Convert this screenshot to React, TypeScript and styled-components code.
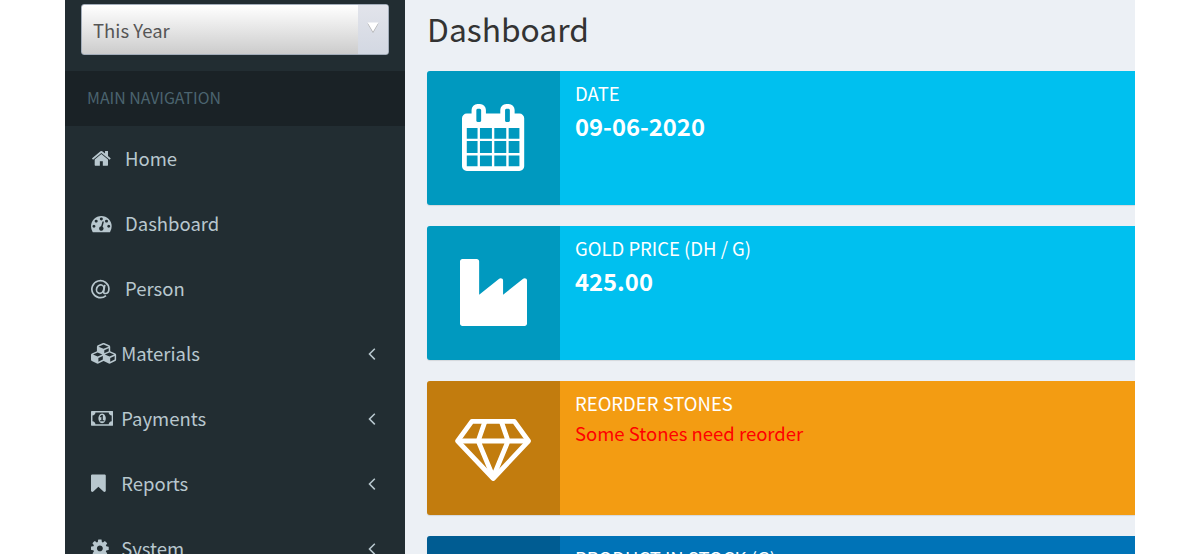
import styled, { createGlobalStyle } from 'styled-components'

const GlobalStyle = createGlobalStyle`
  * {
    box-sizing: border-box;
  }

  body {
    margin: 0;
    background: #fff;
    font-family: 'Noto Sans CJK JP', 'Open Sans', sans-serif;
    overflow: hidden;
  }
`

const Page = styled.div`
  display: flex;
  width: 1070px;
  height: 554px;
  margin: 0 auto;
  overflow: hidden;
  background: #ecf0f5;
`

const Sidebar = styled.aside`
  flex: none;
  width: 340px;
  background: #222d32;
`

const SelectWrapper = styled.div`
  height: 71px;
  padding: 4.4px 16px 0;
`

const Select = styled.div`
  display: flex;
  height: 51px;
  border: 1px solid #a3adba;
  border-radius: 3px;
  overflow: hidden;
  background: linear-gradient(#fff, #ccc);
`

const SelectValue = styled.div`
  flex: 1;
  padding-left: 11px;
  line-height: 50px;
  font-size: 18.5px;
  color: #555;
`

const SelectArrow = styled.div`
  display: flex;
  justify-content: center;
  width: 30px;
  padding: 16px 1px 0 0;
  background: linear-gradient(#e2e4eb, #d3d8e2);
`

const NavHeader = styled.div`
  height: 55px;
  padding-left: 22px;
  line-height: 54px;
  font-size: 15.9px;
  color: #4b646f;
  background: #1a2226;
`

const NavItem = styled.div`
  display: flex;
  align-items: center;
  height: 65px;
  padding: 0 29.5px 0 26px;
  color: #b8c7ce;
`

const NavIcon = styled.span<{ $wide?: boolean }>`
  display: flex;
  width: ${({ $wide }) => ($wide ? '34px' : '30.2px')};
`

const NavLabel = styled.span`
  flex: 1;
  padding-bottom: 2px;
  font-size: 18.5px;
`

const Content = styled.main`
  flex: 1;
  min-width: 0;
  padding-left: 22px;
`

const Title = styled.h1`
  height: 71.4px;
  margin: 0;
  line-height: 56px;
  font-size: 31.8px;
  font-weight: 400;
  color: #333;
`

const InfoBox = styled.div<{ $color: string }>`
  display: flex;
  height: 133.200px;
  margin-bottom: 21.800px;
  border-radius: 3px 0 0 3px;
  overflow: hidden;
  color: #fff;
  background: ${({ $color }) => $color};
  box-shadow: 0 1px 1px rgba(0, 0, 0, 0.1);
`

const InfoBoxIcon = styled.div`
  display: flex;
  align-items: center;
  justify-content: center;
  width: 133px;
  background: rgba(0, 0, 0, 0.2);
`

const InfoBoxContent = styled.div`
  padding: 6.6px 15px;
`

const InfoBoxText = styled.div`
  height: 30px;
  line-height: 30px;
  font-size: 18.5px;
  text-transform: uppercase;
`

const InfoBoxNumber = styled.div`
  line-height: 36px;
  font-size: 23.8px;
  font-weight: 700;
`

const Warning = styled.div`
  line-height: 30px;
  font-size: 18.5px;
  color: #f00;
`

const icons = {
  home: {
    width: 1792,
    path: 'M1472 992v480q0 26-19 45t-45 19h-384v-384h-256v384h-384q-26 0-45-19t-19-45v-480q0-1 .5-3t.5-3l575-474 575 474q1 2 1 6zm223-69l-62 74q-8 9-21 11h-3q-13 0-21-7l-692-577-692 577q-12 8-24 7-13-2-21-11l-62-74q-8-10-7-23.500t11-21.500l719-599q32-26 76-26t76 26l244 204v-195q0-14 9-23t23-9h192q14 0 23 9t9 23v408l219 182q10 8 11 21.500t-7 23.500z'
  },
  tachometer: {
    width: 1792,
    path: 'M384 1152q0-53-37.500-90.500t-90.500-37.500-90.500 37.500-37.500 90.500 37.500 90.500 90.500 37.500 90.500-37.500 37.500-90.500zm192-448q0-53-37.500-90.500t-90.500-37.500-90.500 37.500-37.500 90.500 37.500 90.500 90.500 37.500 90.500-37.500 37.500-90.500zm428 481l101-382q6-26-7.500-48.500t-38.500-29.500-48 6.500-30 39.500l-101 382q-60 5-107 43.500t-63 98.500q-20 77 20 146t117 89 146-20 89-117q16-60-6-117t-72-91zm660-33q0-53-37.500-90.500t-90.500-37.500-90.500 37.500-37.500 90.500 37.500 90.500 90.500 37.500 90.500-37.500 37.500-90.500zm-640-640q0-53-37.500-90.500t-90.500-37.500-90.500 37.500-37.500 90.500 37.500 90.500 90.500 37.500 90.500-37.500 37.500-90.500zm448 192q0-53-37.500-90.500t-90.500-37.500-90.500 37.500-37.500 90.500 37.500 90.500 90.500 37.500 90.500-37.500 37.500-90.500zm320 448q0 261-141 483-19 29-54 29h-1402q-35 0-54-29-141-221-141-483 0-182 71-348t191-286 286-191 348-71 348 71 286 191 191 286 71 348z'
  },
  cubes: {
    width: 2304,
    path: 'M640 1632l384-192v-314l-384 164v342zm-64-454l404-173-404-173-404 173zm1088 454l384-192v-314l-384 164v342zm-64-454l404-173-404-173-404 173zm-448-293l384-165v-266l-384 164v267zm-64-379l441-189-441-189-441 189zm1088 518v416q0 36-19 67t-52 47l-448 224q-25 14-57 14t-57-14l-448-224q-4-2-7-4-2 2-7 4l-448 224q-25 14-57 14t-57-14l-448-224q-33-16-52-47t-19-67v-416q0-38 21.500-70t56.500-48l434-186v-400q0-38 21.500-70t56.500-48l448-192q23-10 50-10t50 10l448 192q35 16 56.500 48t21.500 70v400l434 186q36 16 57 48t21 70z'
  },
  money: {
    width: 1920,
    path: 'M768 1152h384v-96h-128v-448h-114l-148 137 77 80q42-37 55-57h2v288h-128v96zm512-256q0 70-21 142t-59.500 134-101.500 101-138 39-138-39-101.500-101-59.500-134-21-142 21-142 59.500-134 101.500-101 138-39 138 39 101.500 101 59.500 134 21 142zm512 256v-512q-106 0-181-75t-75-181h-1152q0 106-75 181t-181 75v512q106 0 181 75t75 181h1152q0-106 75-181t181-75zm128-832v1152q0 26-19 45t-45 19h-1792q-26 0-45-19t-19-45v-1152q0-26 19-45t45-19h1792q26 0 45 19t19 45z'
  },
  bookmark: {
    width: 1280,
    left: 256,
    path: 'M1420 128q23 0 44 9 33 13 52.500 41t19.500 62v1289q0 34-19.500 62t-52.500 41q-19 8-44 8-48 0-83-32l-441-424-441 424q-36 33-83 33-23 0-44-9-33-13-52.500-41t-19.500-62v-1289q0-34 19.500-62t52.500-41q21-9 44-9h1048z'
  },
  cog: {
    width: 1536,
    left: 128,
    path: 'M1152 896q0-106-75-181t-181-75-181 75-75 181 75 181 181 75 181-75 75-181zm512-109v222q0 12-8 23t-20 13l-185 28q-19 54-39 91 35 50 107 138 10 12 10 25t-9 23q-27 37-99 108t-94 71q-12 0-26-9l-138-108q-44 23-91 38-16 136-29 186-7 28-36 28h-222q-14 0-24.500-8.500t-11.500-21.500l-28-184q-49-16-90-37l-141 107q-10 9-25 9-14 0-25-11-126-114-165-168-7-10-7-23 0-12 8-23 15-21 51-66.500t54-70.500q-27-50-41-99l-183-27q-13-2-21-12.500t-8-23.500v-222q0-12 8-23t19-13l186-28q14-46 39-92-40-57-107-138-10-12-10-24 0-10 9-23 26-36 98.500-107.500t94.500-71.500q13 0 26 10l138 107q44-23 91-38 16-136 29-186 7-28 36-28h222q14 0 24.500 8.500t11.500 21.500l28 184q49 16 90 37l142-107q9-9 24-9 13 0 25 10 129 119 165 170 7 8 7 22 0 12-8 23-15 21-51 66.500t-54 70.500q26 50 41 98l183 28q13 2 21 12.500t8 23.500z'
  },
  angleLeft: {
    width: 640,
    left: 576,
    path: 'M1203 544q0 13-10 23l-393 393 393 393q10 10 10 23t-10 23l-50 50q-10 10-23 10t-23-10l-466-466q-10-10-10-23t10-23l466-466q10-10 23-10t23 10l50 50q10 10 10 23z'
  },
  calendar: {
    width: 1664,
    left: 64,
    path: 'M192 1664h288v-288h-288v288zm352 0h320v-288h-320v288zm-352-352h288v-320h-288v320zm352 0h320v-320h-320v320zm-352-384h288v-288h-288v288zm736 736h320v-288h-320v288zm-384-736h320v-288h-320v288zm768 736h288v-288h-288v288zm-384-352h320v-320h-320v320zm-352-864v-288q0-13-9.500-22.500t-22.500-9.500h-64q-13 0-22.500 9.500t-9.500 22.500v288q0 13 9.500 22.500t22.500 9.500h64q13 0 22.500-9.500t9.500-22.500zm736 864h288v-320h-288v320zm-384-384h320v-288h-320v288zm384 0h288v-288h-288v288zm32-480v-288q0-13-9.500-22.500t-22.500-9.500h-64q-13 0-22.500 9.500t-9.500 22.500v288q0 13 9.500 22.500t22.500 9.500h64q13 0 22.500-9.500t9.500-22.500zm384-64v1280q0 52-38 90t-90 38h-1408q-52 0-90-38t-38-90v-1280q0-52 38-90t90-38h128v-96q0-66 47-113t113-47h64q66 0 113 47t47 113v96h384v-96q0-66 47-113t113-47h64q66 0 113 47t47 113v96h128q52 0 90 38t38 90z'
  },
  industry: {
    width: 1792,
    path: 'M448 0q26 0 45 19t19 45v891l536-429q17-14 40-14 26 0 45 19t19 45v379l536-429q17-14 40-14 26 0 45 19t19 45v1152q0 26-19 45t-45 19h-1664q-26 0-45-19t-19-45v-1664q0-26 19-45t45-19h384z'
  }
}

type IconName = keyof typeof icons

const Icon = ({ name, size = 20.7 }: { name: IconName; size?: number }) => {
  const icon: { width: number; left?: number; path: string } = icons[name]
  return (
    <svg
      width={(icon.width / 1792) * size}
      height={size}
      viewBox={`${icon.left ?? 0} 0 ${icon.width} 1792`}
      fill="currentColor"
    >
      <path d={icon.path} />
    </svg>
  )
}

const AtIcon = () => (
  <svg
    width="19"
    height="20"
    viewBox="0 0 18 19"
    fill="none"
    stroke="currentColor"
    strokeWidth="1.6"
  >
    <path d="M14.2 15.800A8.100 8.100 0 1 1 17 9.200c0 3-1.700 4.600-3.500 4.600-1.300 0-1.700-.8-1.500-2l1.100-6.300" />
    <ellipse cx="8.700" cy="9.600" rx="3.400" ry="4.100" transform="rotate(20 8.700 9.600)" />
  </svg>
)

const DiamondIcon = () => (
  <svg
    width="77"
    height="66"
    viewBox="0 0 77 66"
    fill="none"
    stroke="currentColor"
    strokeWidth="4.800"
    strokeLinejoin="round"
  >
    <path d="M16.900 6.400h42.400L73.500 26 38.200 63.500 2.600 26z" />
    <path d="M2.600 26h70.900M30 6.400L23.200 26l15 36 14.900-36-6.800-19.600" />
  </svg>
)

const navItems: { label: string; icon?: IconName; tree?: boolean }[] = [
  { label: 'Home', icon: 'home' },
  { label: 'Dashboard', icon: 'tachometer' },
  { label: 'Person' },
  { label: 'Materials', icon: 'cubes', tree: true },
  { label: 'Payments', icon: 'money', tree: true },
  { label: 'Reports', icon: 'bookmark', tree: true },
  { label: 'System', icon: 'cog', tree: true }
]

const App = () => {
  return (
    <>
      <GlobalStyle />
      <Page>
        <Sidebar>
          <SelectWrapper>
            <Select>
              <SelectValue>This Year</SelectValue>
              <SelectArrow>
                <svg width="12" height="13" viewBox="0 0 12 13">
                  <path d="M.5 2.500h11L6 12z" fill="#aaa" />
                  <path d="M.5 1.500h11L6 10.800z" fill="#fff" />
                </svg>
              </SelectArrow>
            </Select>
          </SelectWrapper>
          <NavHeader>MAIN NAVIGATION</NavHeader>
          {navItems.map(({ label, icon, tree }) => (
            <NavItem key={label}>
              <NavIcon $wide={!tree}>
                {icon ? <Icon name={icon} /> : <AtIcon />}
              </NavIcon>
              <NavLabel>{label}</NavLabel>
              {tree && <Icon name="angleLeft" />}
            </NavItem>
          ))}
        </Sidebar>
        <Content>
          <Title>Dashboard</Title>
          <InfoBox $color="#00c0ef">
            <InfoBoxIcon>
              <Icon name="calendar" size={67} />
            </InfoBoxIcon>
            <InfoBoxContent>
              <InfoBoxText>Date</InfoBoxText>
              <InfoBoxNumber>09-06-2020</InfoBoxNumber>
            </InfoBoxContent>
          </InfoBox>
          <InfoBox $color="#00c0ef">
            <InfoBoxIcon>
              <Icon name="industry" size={67} />
            </InfoBoxIcon>
            <InfoBoxContent>
              <InfoBoxText>Gold Price (DH / g)</InfoBoxText>
              <InfoBoxNumber>425.00</InfoBoxNumber>
            </InfoBoxContent>
          </InfoBox>
          <InfoBox $color="#f39c12">
            <InfoBoxIcon>
              <DiamondIcon />
            </InfoBoxIcon>
            <InfoBoxContent>
              <InfoBoxText>Reorder Stones</InfoBoxText>
              <Warning>Some Stones need reorder</Warning>
            </InfoBoxContent>
          </InfoBox>
          <InfoBox $color="#0073b7">
            <InfoBoxIcon />
            <InfoBoxContent>
              <InfoBoxText>Product in Stock (G)</InfoBoxText>
            </InfoBoxContent>
          </InfoBox>
        </Content>
      </Page>
    </>
  )
}

export default App
